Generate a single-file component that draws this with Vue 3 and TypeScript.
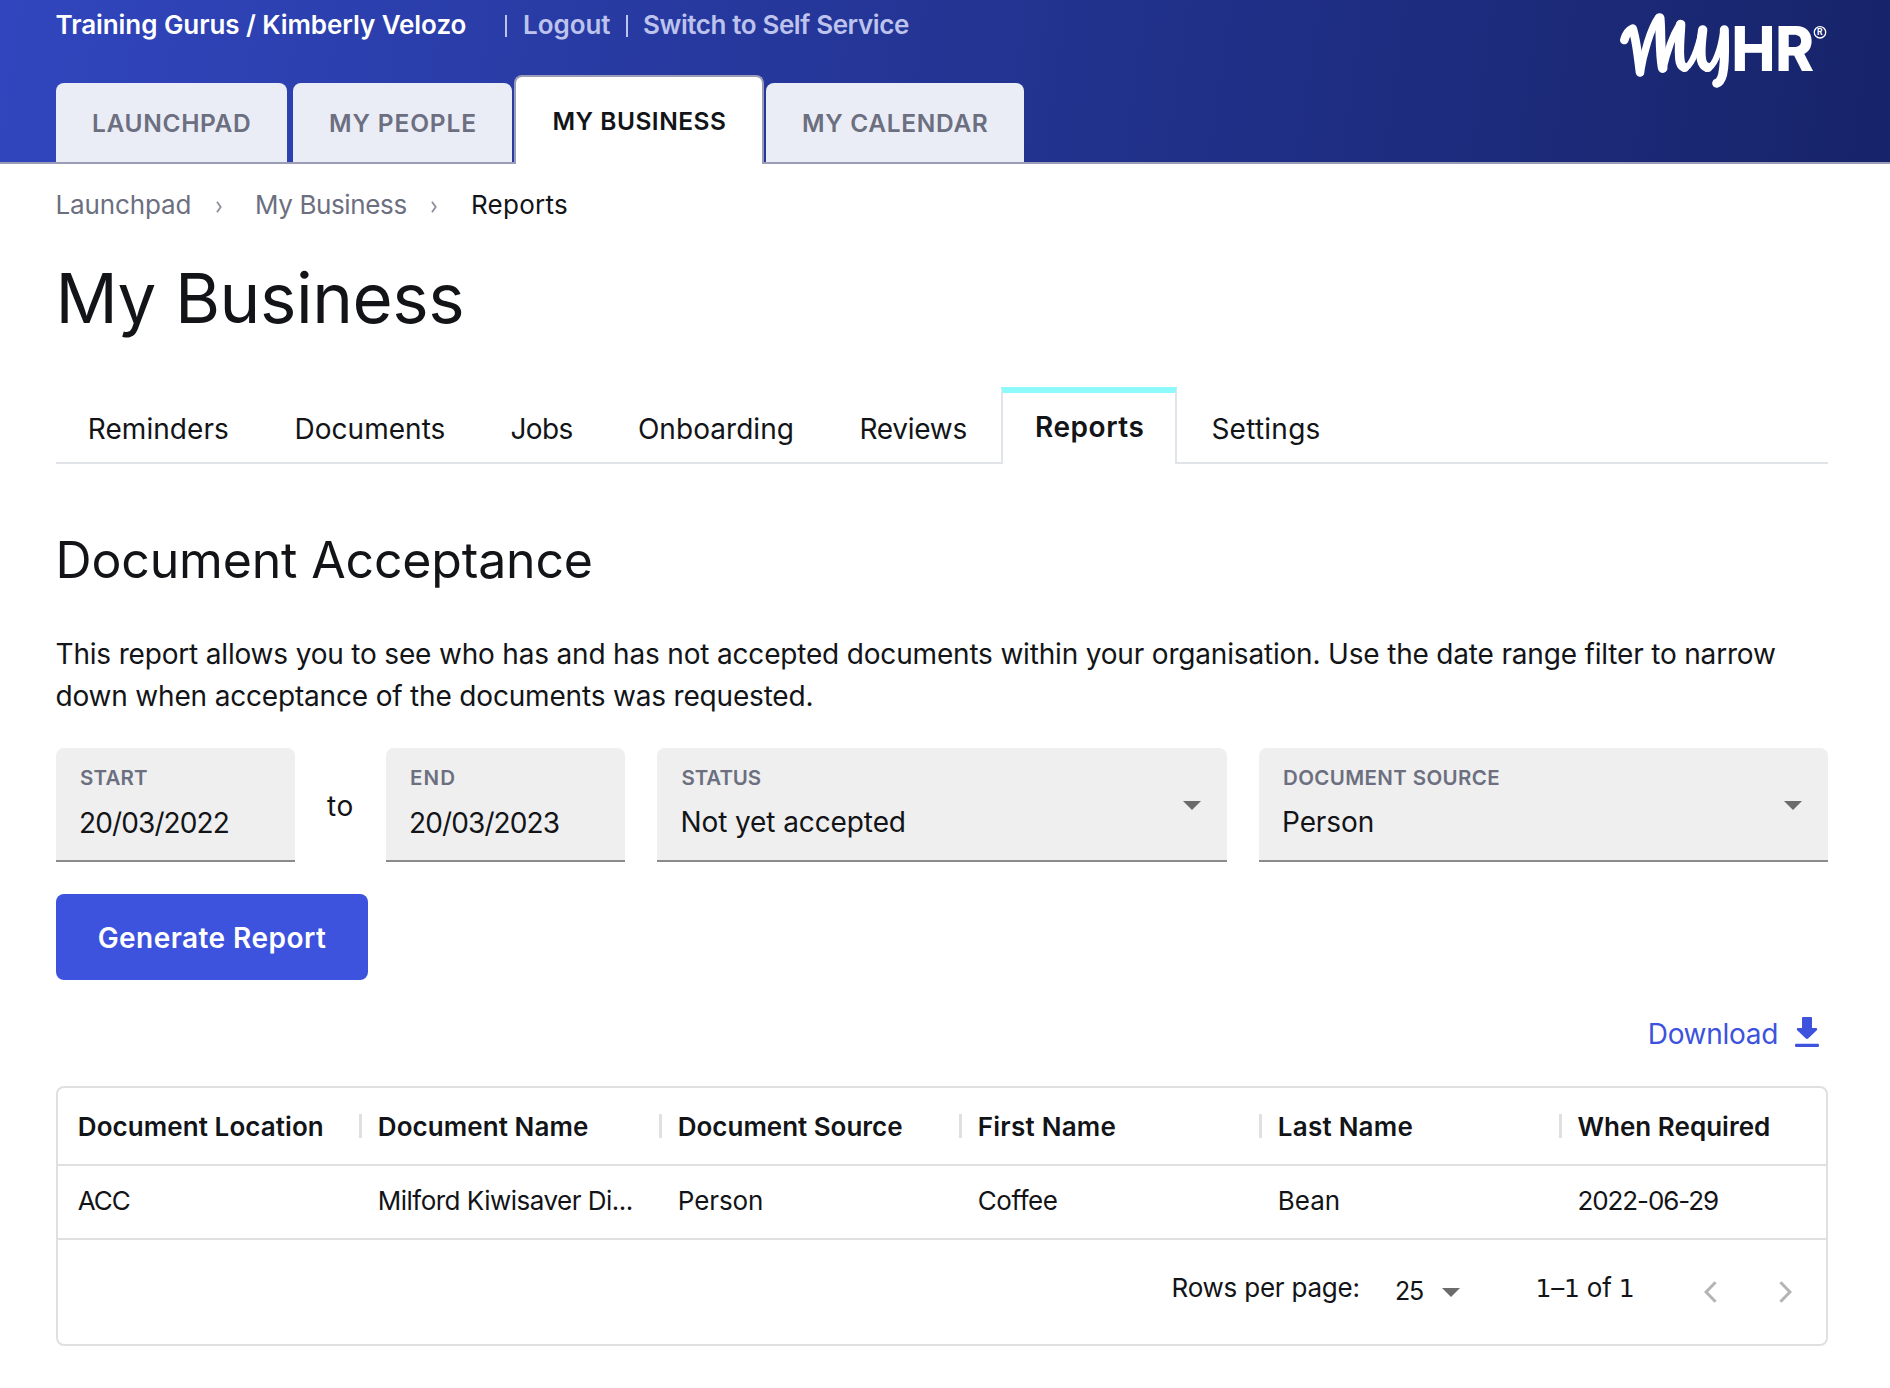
<script setup lang="ts">
interface Item {
  label: string
  width: number
  spacing: number
  active?: boolean
}
interface Cell {
  text: string
  spacing: number
}

const mainTabs: Item[] = [
  { label: 'LAUNCHPAD', width: 231, spacing: 0.65 },
  { label: 'MY PEOPLE', width: 219, spacing: 0.85 },
  { label: 'MY BUSINESS', width: 249.5, spacing: 0.5, active: true },
  { label: 'MY CALENDAR', width: 258, spacing: 0.65 },
]

const subTabs: Item[] = [
  { label: 'Reminders', width: 206, spacing: 0.05 },
  { label: 'Documents', width: 216, spacing: 0.05 },
  { label: 'Jobs', width: 127.5, spacing: -0.6 },
  { label: 'Onboarding', width: 221.5, spacing: 0.05 },
  { label: 'Reviews', width: 174, spacing: -0.27 },
  { label: 'Reports', width: 175.5, spacing: 0.55, active: true },
  { label: 'Settings', width: 170, spacing: 0.25 },
]

const columns: Cell[] = [
  { text: 'Document Location', spacing: 0.08 },
  { text: 'Document Name', spacing: 0.08 },
  { text: 'Document Source', spacing: -0.02 },
  { text: 'First Name', spacing: 0.24 },
  { text: 'Last Name', spacing: 0.24 },
  { text: 'When Required', spacing: 0.03 },
]

const row: Cell[] = [
  { text: 'ACC', spacing: -1 },
  { text: 'Milford Kiwisaver Di...', spacing: -0.51 },
  { text: 'Person', spacing: -0.1 },
  { text: 'Coffee', spacing: -0.45 },
  { text: 'Bean', spacing: 0 },
  { text: '2022-06-29', spacing: -1.08 },
]
</script>

<template>
  <div class="page">
    <header class="header">
      <div class="topbar">
        <span class="account">Training Gurus / Kimberly Velozo</span>
        <i class="bar bar-first"></i>
        <a class="link logout">Logout</a>
        <i class="bar"></i>
        <a class="link switch">Switch to Self Service</a>
        <svg class="logo" width="220" height="90" viewBox="0 0 220 90">
          <g transform="scale(.33333)" fill="none" stroke="#fff" stroke-linecap="round" stroke-linejoin="round">
            <path stroke-width="26" d="M43 105C48 86 57 76 68 71C75 92 84 150 90 202" />
            <path stroke-width="22" d="M91 203C99 150 122 70 145 38" />
            <path stroke-width="29" d="M149 39C153 80 149 140 158 189" />
            <path stroke-width="21" d="M159 192C170 145 189 90 209 58" />
            <path stroke-width="28" d="M212 58C211 95 204 140 211 172Q215 186 224 187" />
            <path stroke-width="18" d="M222 191C245 184 264 130 275 76" />
            <path stroke-width="28" d="M278 75C274 110 268 150 277 173Q283 186 294 187" />
            <path stroke-width="18" d="M291 192C316 184 332 130 340 76" />
            <path stroke-width="27" d="M343 74C343 120 347 165 338 208Q332 231 320 235" />
          </g>
          <text class="logo-hr" transform="translate(121.5 66) scale(.945 1)">HR</text>
          <circle cx="210" cy="27.3" r="5.7" fill="none" stroke="#fff" stroke-width="1.3" />
          <text class="logo-r" x="207" y="30.4">R</text>
        </svg>
      </div>
      <nav class="tabs">
        <a
          v-for="tab in mainTabs"
          :key="tab.label"
          class="tab"
          :class="{ active: tab.active }"
          :style="{ width: tab.width + 'px', letterSpacing: tab.spacing + 'px' }"
        >{{ tab.label }}</a>
      </nav>
    </header>

    <main class="main">
      <nav class="crumbs">
        <a class="crumb first">Launchpad</a>
        <svg class="sep" width="6" height="12" viewBox="0 0 6 12"><path d="M1 .7L4.7 6L1 11.3" /></svg>
        <a class="crumb second">My Business</a>
        <svg class="sep" width="6" height="12" viewBox="0 0 6 12"><path d="M1 .7L4.7 6L1 11.3" /></svg>
        <span class="crumb current">Reports</span>
      </nav>

      <h1>My Business</h1>

      <nav class="subtabs">
        <a
          v-for="tab in subTabs"
          :key="tab.label"
          class="subtab"
          :class="{ active: tab.active }"
          :style="{ width: tab.width + 'px', letterSpacing: tab.spacing + 'px' }"
        >{{ tab.label }}</a>
      </nav>

      <h2>Document Acceptance</h2>
      <p class="intro">
        This report allows you to see who has and has not accepted documents within your organisation. Use the date
        range filter to narrow down when acceptance of the documents was requested.
      </p>

      <form class="filters">
        <div class="field date">
          <label>START</label>
          <span class="value">20/03/2022</span>
        </div>
        <span class="to">to</span>
        <div class="field date">
          <label class="end">END</label>
          <span class="value">20/03/2023</span>
        </div>
        <div class="field select">
          <label class="status">STATUS</label>
          <span class="value">Not yet accepted</span>
          <svg class="caret" width="18" height="9" viewBox="0 0 18 9"><path d="M0 0H18L9 9Z" /></svg>
        </div>
        <div class="field select">
          <label class="source">DOCUMENT SOURCE</label>
          <span class="value">Person</span>
          <svg class="caret" width="18" height="9" viewBox="0 0 18 9"><path d="M0 0H18L9 9Z" /></svg>
        </div>
      </form>

      <button class="generate" type="button">Generate Report</button>

      <div class="download">
        <span>Download</span>
        <svg width="24" height="30" viewBox="0 0 24 30">
          <path d="M8 0H16Q17 0 17 1V11H21Q23 11.4 21.8 13.2L13.4 21.2Q12 22.6 10.6 21.2L2.2 13.2Q1 11.4 3 11H7V1Q7 0 8 0Z" />
          <rect y="26.8" width="24" height="3.2" rx="1.2" />
        </svg>
      </div>

      <section class="grid">
        <div class="grid-row head">
          <div
            v-for="cell in columns"
            :key="cell.text"
            class="cell"
            :style="{ letterSpacing: cell.spacing + 'px' }"
          >{{ cell.text }}</div>
        </div>
        <div class="grid-row">
          <div
            v-for="(cell, i) in row"
            :key="i"
            class="cell"
            :style="{ letterSpacing: cell.spacing + 'px' }"
          >{{ cell.text }}</div>
        </div>
        <footer class="pager">
          <span class="rows">Rows per page:</span>
          <span class="size">25</span>
          <svg class="size-caret" width="18" height="9" viewBox="0 0 18 9"><path d="M0 0H18L9 9Z" /></svg>
          <span class="range"><b>1</b>–<b>1</b> of <b>1</b></span>
          <svg class="arrow prev" width="13" height="22" viewBox="0 0 13 22"><path d="M11.6 1.2L2 11L11.6 20.8" /></svg>
          <svg class="arrow next" width="13" height="22" viewBox="0 0 13 22"><path d="M1.4 1.2L11 11L1.4 20.8" /></svg>
        </footer>
      </section>
    </main>
  </div>
</template>

<style>
body {
  margin: 0;
  background: #fff;
}
</style>

<style scoped>
.page {
  width: 1890px;
  height: 1388px;
  overflow: hidden;
  font-family: Inter, 'Liberation Sans', sans-serif;
  color: #121417;
  background: #fff;
}
.page * {
  box-sizing: border-box;
}
.header {
  display: flex;
  flex-direction: column;
  height: 164px;
  border-bottom: 2px solid #9a9db5;
  background: linear-gradient(98deg, #3146be 0%, #25379a 42%, #17246a 100%) border-box;
}
.topbar {
  display: flex;
  height: 49px;
  padding: 0 60px 0 55.5px;
  font-size: 26px;
  line-height: 50px;
}
.account {
  width: 449px;
  color: #fff;
  font-weight: 600;
  letter-spacing: -0.06px;
}
.bar {
  width: 3px;
  height: 22px;
  margin: 15px 14px 0 0;
  border-left: 2.5px solid #bdc3ec;
}
.bar-first {
  margin-right: 15.5px;
}
.link {
  color: #bdc3ec;
  font-weight: 600;
}
.logout {
  width: 103px;
  letter-spacing: -0.05px;
}
.switch {
  letter-spacing: -0.4px;
}
.logo {
  flex: none;
  margin: 5px 0 0 auto;
}
.logo-hr {
  fill: #fff;
  font-size: 62px;
  font-weight: 800;
}
.logo-r {
  fill: #fff;
  font-size: 8.5px;
  font-weight: 700;
}
.tabs {
  display: flex;
  align-items: flex-end;
  margin: auto 0 -2px 56px;
}
.tab {
  height: 79px;
  margin: 0 6px 2px 0;
  padding: 1px 0 0 36px;
  border-radius: 8px 8px 0 0;
  background: #eaedf6;
  color: #6c6f80;
  font-size: 24.5px;
  font-weight: 600;
  line-height: 78px;
  white-space: nowrap;
}
.tab.active {
  height: 89px;
  margin: 0 2px 0 -4px;
  padding: 1px 0 0 36.5px;
  border: 2px solid #9a9db5;
  border-bottom: 0;
  background: #fff;
  color: #121417;
  line-height: 87px;
}
.tab:last-child {
  padding-left: 36.5px;
}
.main {
  padding: 21px 62px 0 56px;
}
.crumbs {
  display: flex;
  height: 39px;
  margin-left: -0.5px;
  color: #6c6f80;
  font-size: 26px;
  line-height: 39px;
}
.crumb.first {
  width: 160.5px;
  letter-spacing: -0.12px;
}
.crumb.second {
  width: 176px;
  margin-left: 33px;
  letter-spacing: -0.38px;
}
.crumb.current {
  margin-left: 34px;
  color: #121417;
  letter-spacing: 0.25px;
}
.sep {
  margin-top: 15.5px;
  fill: none;
  stroke: #8d8f9d;
  stroke-width: 1.8;
}
h1 {
  margin: 32px 0 0 -0.6px;
  font-size: 69px;
  font-weight: 400;
  line-height: 84px;
  letter-spacing: -0.45px;
}
.subtabs {
  display: flex;
  align-items: flex-end;
  height: 77px;
  margin-top: 47px;
  border-bottom: 2px solid #e0e3e8;
}
.subtab {
  height: 66px;
  padding-left: 32.4px;
  font-size: 28px;
  line-height: 66px;
  white-space: nowrap;
}
.subtab:first-child {
  padding-left: 31.8px;
}
.subtab.active {
  height: 77px;
  margin: 0 2.5px -2px 0;
  padding-left: 32px;
  border: 2px solid #e0e3e8;
  border-top: 6px solid #8cf9fb;
  border-bottom: 0;
  background: #fff;
  font-weight: 600;
  line-height: 69px;
}
h2 {
  margin: 66px 0 0 -0.4px;
  font-size: 50px;
  font-weight: 400;
  line-height: 60px;
  letter-spacing: -0.17px;
}
.intro {
  margin: 43px 0 0 -0.5px;
  font-size: 28px;
  line-height: 42px;
  letter-spacing: -0.18px;
}
.filters {
  display: flex;
  height: 114px;
  margin-top: 31px;
}
.field {
  position: relative;
  height: 114px;
  padding: 17px 0 0 23px;
  border-bottom: 2px solid #8b8b8d;
  border-radius: 8px 8px 0 0;
  background: #efefef;
}
.field label {
  display: block;
  margin-left: 1px;
  color: #6c6f80;
  font-size: 20.5px;
  font-weight: 600;
  line-height: 25px;
  letter-spacing: 0.18px;
}
.field label.end {
  letter-spacing: 1.1px;
}
.field label.status {
  letter-spacing: -0.1px;
}
.field label.source {
  letter-spacing: 0.38px;
}
.value {
  display: block;
  margin-top: 11px;
  font-size: 28px;
  line-height: 42px;
}
.date {
  width: 239px;
}
.date .value {
  margin-top: 12px;
  letter-spacing: -0.88px;
}
.select {
  flex: 1;
  margin-left: 32px;
  padding-left: 23.5px;
}
.select .value {
  letter-spacing: -0.1px;
}
.caret {
  position: absolute;
  top: 53px;
  right: 26px;
  fill: #6b6b6b;
}
.to {
  width: 91px;
  padding-top: 1px;
  font-size: 28px;
  line-height: 114px;
  letter-spacing: 0.6px;
  text-align: center;
}
.generate {
  display: block;
  width: 312px;
  height: 86px;
  margin-top: 32px;
  padding: 2px 0 0;
  border: 0;
  border-radius: 8px;
  background: #3d52dd;
  color: #fff;
  font-family: inherit;
  font-size: 28px;
  font-weight: 600;
  letter-spacing: 0.45px;
}
.download {
  display: flex;
  justify-content: flex-end;
  gap: 17px;
  margin-top: 33px;
  padding-right: 9px;
  color: #3d52dd;
  font-size: 28px;
  line-height: 42px;
  letter-spacing: -0.3px;
}
.download svg {
  margin-top: 4px;
  fill: #3d52dd;
}
.grid {
  height: 260px;
  margin-top: 31px;
  border: 2px solid #e0e0e0;
  border-radius: 8px;
  font-size: 26px;
}
.grid-row {
  display: flex;
  height: 74px;
  border-bottom: 2px solid #e0e0e0;
  line-height: 70px;
}
.grid-row.head {
  height: 78px;
  font-weight: 600;
  line-height: 77px;
}
.cell {
  position: relative;
  flex: 0 0 300px;
  padding-left: 19.8px;
  white-space: nowrap;
}
.cell:last-child {
  flex: 1;
  padding-left: 19.4px;
}
.head .cell + .cell::before {
  position: absolute;
  top: 26px;
  left: 1px;
  width: 3px;
  height: 24px;
  background: #e0e0e0;
  content: '';
}
.pager {
  display: flex;
  padding-left: 1113.5px;
  white-space: nowrap;
}
.rows {
  width: 223.5px;
  line-height: 96px;
  letter-spacing: -0.22px;
}
.size {
  width: 47px;
  font-size: 25px;
  line-height: 102px;
  letter-spacing: -1.2px;
}
.size-caret {
  margin-top: 48px;
  fill: #6b6b6b;
}
.range {
  width: 168px;
  margin-left: 75.5px;
  margin-right: 0.5px;
  line-height: 96px;
  letter-spacing: -0.2px;
}
.range b {
  font-family: 'DejaVu Sans', sans-serif;
  font-size: 25px;
  font-weight: 400;
  line-height: 1;
}
.arrow {
  margin-top: 40.5px;
  fill: none;
  stroke: #b4b4b4;
  stroke-width: 3;
}
.next {
  margin-left: 62px;
}
</style>
